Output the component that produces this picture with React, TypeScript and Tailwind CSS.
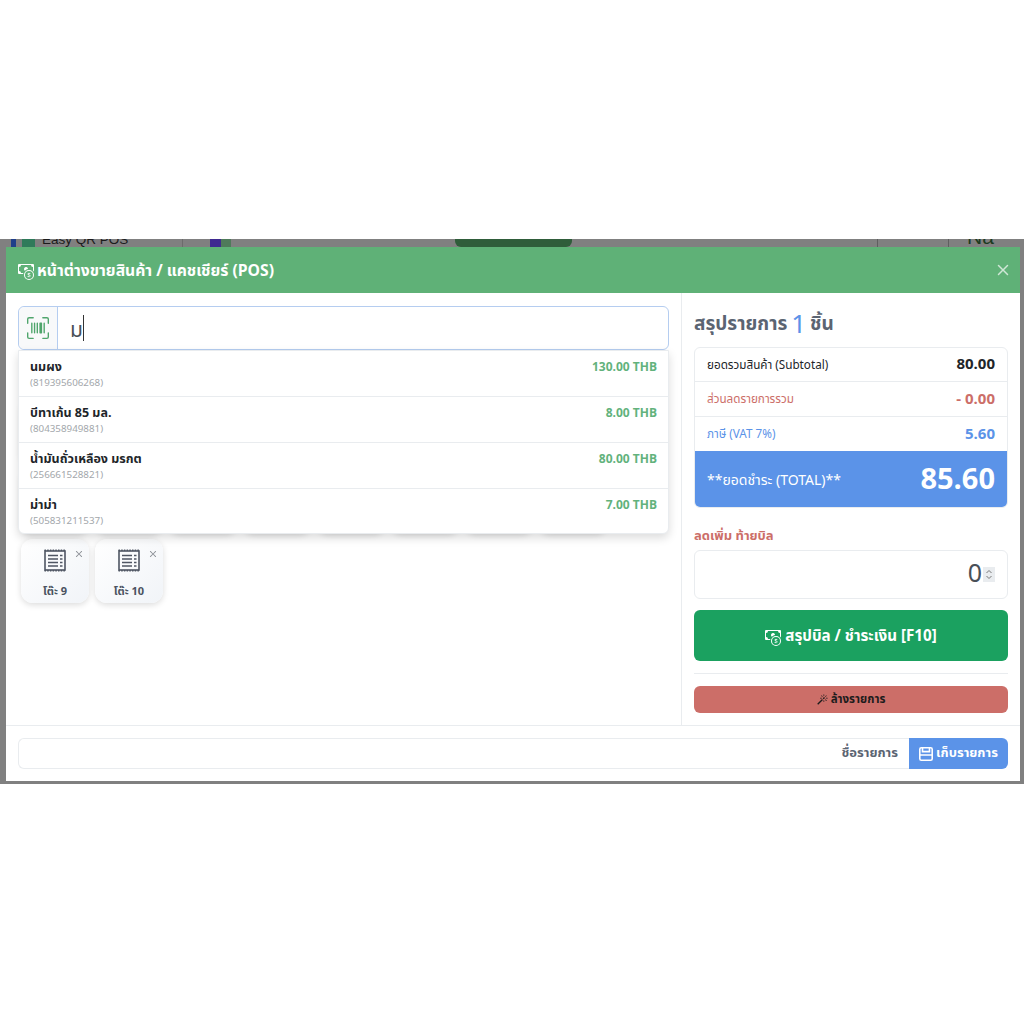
import { BsCashCoin, BsUpcScan, BsMagic, BsX } from "react-icons/bs";

const font = { fontFamily: '"Noto Sans Thai","Noto Sans","Open Sans","DejaVu Sans",sans-serif' };

const items = [
  ["นมผง", "(819395606268)", "130.00 THB"],
  ["บีทาเก้น 85 มล.", "(804358949881)", "8.00 THB"],
  ["น้ำมันถั่วเหลือง มรกต", "(256661528821)", "80.00 THB"],
  ["ม่าม่า", "(505831211537)", "7.00 THB"],
];

function BillIcon() {
  return (
    <svg width="22" height="23" viewBox="0 0 22 23" fill="none" stroke="#4f5663">
      <rect x="1" y="2" width="20" height="19" strokeWidth="1.6" />
      <path d="M0.5 1.2H21.5M0.5 21.8H21.5" strokeWidth="1.6" strokeDasharray="1.5 1.2" />
      <path d="M4 6.5H14M4 10H14M4 13.5H14M4 17H14" strokeWidth="1.5" />
      <path d="M16 6.5H18.5M16 10H18.5M16 13.5H18.5M16 17H18.5" strokeWidth="1.5" />
    </svg>
  );
}

function SaveIcon() {
  return (
    <svg width="14" height="14" viewBox="0 0 14 14" fill="none" stroke="currentColor" strokeWidth="1.6">
      <rect x="0.8" y="0.8" width="12.4" height="12.4" rx="1.5" />
      <path d="M3.5 1V4.6H10.5V1M0.8 8H13.2" />
    </svg>
  );
}

function TableCard({ label }: { label: string }) {
  return (
    <div className="relative flex h-[64px] w-[68px] flex-col items-center rounded-xl bg-gradient-to-br from-white to-[#f1f4f8] pt-[10px] shadow-[0_2px_6px_rgba(0,0,0,0.14)]">
      <BillIcon />
      <BsX className="absolute right-[3px] top-[8px] text-[14px] text-[#8b8f96]" />
      <span className="mt-[13px] text-[11px] font-bold leading-[14px] text-[#4a5260]">{label}</span>
    </div>
  );
}

function SummaryRow({ label, value, color, h, last }: { label: string; value: string; color: string; h: string; last?: boolean }) {
  return (
    <div className={`flex items-center justify-between px-[12px] pt-[2px] ${h} ${last ? "" : "border-b border-[#e9ecef]"} ${color}`}>
      <span className="text-[11.7px]">{label}</span>
      <span className="text-[15px] font-bold">{value}</span>
    </div>
  );
}

export default function App() {
  return (
    <div className="flex min-h-[1024px] flex-col bg-white" style={font}>
      <div className="h-[239px]" />
      <div className="relative bg-[#808080] pb-[3px] pl-[6px] pr-[4px] pt-[8px]">
        <div className="absolute inset-x-0 top-0 h-[8px] overflow-hidden">
          <div className="absolute left-[11px] top-[-8px] h-[16px] w-[5px] bg-[#1f3f8a]" />
          <div className="absolute left-[22px] top-[-8px] h-[16px] w-[13px] bg-[#2f7a5a]" />
          <div className="absolute left-[42px] top-[-9px] text-[13.5px] leading-[20px] text-[#1b1b1b]" style={{ fontFamily: '"Liberation Sans",sans-serif' }}>Easy QR POS</div>
          <div className="absolute left-[182px] top-0 h-[8px] w-px bg-[#6c6c6c]" />
          <div className="absolute left-[210px] top-[-8px] h-[16px] w-[11px] bg-[#3f2a90]" />
          <div className="absolute left-[221px] top-[-8px] h-[16px] w-[10px] bg-[#4f7a5a]" />
          <div className="absolute left-[455px] top-0 h-[8px] w-[117px] rounded-b-md bg-[#2f5d3a]" />
          <div className="absolute left-[877px] top-0 h-[8px] w-px bg-[#5f5f5f]" />
          <div className="absolute left-[948px] top-0 h-[8px] w-px bg-[#5f5f5f]" />
          <div className="absolute left-[967px] top-[-14px] text-[21px] leading-[24px] text-[#1c3a20]" style={{ fontFamily: '"Liberation Sans",sans-serif' }}>Na</div>
        </div>
        <div className="relative flex h-[534px] flex-col bg-white">
          <header className="flex h-[46px] shrink-0 items-center justify-between bg-[#5fb177] pl-[12px] pr-[5px] text-white">
            <div className="flex items-center gap-[3px] pt-[4px]">
              <BsCashCoin className="text-[16px]" />
              <span className="text-[15.7px] font-bold">หน้าต่างขายสินค้า / แคชเชียร์ (POS)</span>
            </div>
            <BsX className="text-[24px] text-[#cfe7d6]" />
          </header>

          <div className="flex min-h-0 flex-1">
            <div className="w-[676px] shrink-0 border-r border-[#e9ecef] pl-[12px] pr-[12px] pt-[13px]">
              <div className="relative">
                <div className="flex h-[44px] rounded-md border border-[#b5cdf0]">
                  <div className="flex w-[39px] items-center justify-center rounded-l-md border-r border-[#b5cdf0] bg-[#f8f9fa]">
                    <BsUpcScan className="text-[22px] text-[#4fa56c]" />
                  </div>
                  <div className="flex items-center pl-[12px] text-[21px] leading-none text-[#495057]">
                    <span className="pt-[5px]">ม</span>
                    <span className="h-[26px] w-px bg-[#333]" />
                  </div>
                </div>
                <div className="absolute inset-x-0 top-[44px] z-10 rounded-b-md border border-[#e9ecef] bg-white shadow-[0_4px_10px_rgba(0,0,0,0.14)]">
                  {items.map(([name, code, price], i) => (
                    <div key={code} className={`flex justify-between px-[11px] pt-[8px] ${i < 3 ? "h-[46px] border-b border-[#e9ecef]" : "h-[44px]"}`}>
                      <div>
                        <div className="text-[12.5px] font-bold leading-[17px] text-[#212529]">{name}</div>
                        <div className="text-[9.8px] leading-[14px] text-[#a3a7ab]">{code}</div>
                      </div>
                      <div className="text-[12px] font-bold leading-[17px] text-[#62b27c]">{price}</div>
                    </div>
                  ))}
                </div>
              </div>
              <div className="mt-[49px] flex flex-wrap gap-x-[6px] gap-y-[6px] pl-[3px]">
                {[1, 2, 3, 4, 5, 6, 7, 8, 1, 2, 3, 4, 5, 6, 7, 8, 9, 10].map((n, i) => (
                  <TableCard key={i} label={`โต๊ะ ${n}`} />
                ))}
              </div>
            </div>

            <aside className="flex flex-1 flex-col pl-[12px] pr-[12px] pt-[15px]">
              <h2 className="flex h-[32px] items-center gap-[4px] pt-[2px] text-[19px] font-bold text-[#5b6472]">
                สรุปรายการ <span className="text-[26px] font-normal leading-none text-[#5b93e8]">1</span> ชิ้น
              </h2>
              <div className="mt-[7px] overflow-hidden rounded-md border border-[#e9ecef]">
                <SummaryRow h="h-[34px]" label="ยอดรวมสินค้า (Subtotal)" value="80.00" color="text-[#212529]" />
                <SummaryRow h="h-[35px]" label="ส่วนลดรายการรวม" value="- 0.00" color="text-[#cc6e68]" />
                <SummaryRow h="h-[34px]" last label="ภาษี (VAT 7%)" value="5.60" color="text-[#5b93e8]" />
                <div className="flex h-[56px] items-center justify-between bg-[#5b93e8] px-[12px] pt-[3px] text-white">
                  <span className="text-[14px]">**ยอดชำระ (TOTAL)**</span>
                  <span className="text-[29px] font-bold">85.60</span>
                </div>
              </div>
              <div className="mt-[19px] text-[13px] font-bold leading-[18px] text-[#cc6e68]">ลดเพิ่ม ท้ายบิล</div>
              <div className="mt-[5px] flex h-[49px] items-center justify-end rounded-md border border-[#e9ecef] px-[12px] text-[25px] text-[#495057]">
                0
                <span className="ml-[1px] flex h-[15px] w-[12px] items-center justify-center bg-[#e9ecef]">
                  <svg width="8" height="11" viewBox="0 0 8 11" fill="none" stroke="#777" strokeWidth="1">
                    <path d="M1.5 4 4 1.5 6.5 4M1.5 7 4 9.5 6.5 7" />
                  </svg>
                </span>
              </div>
              <button className="mt-[11px] flex h-[51px] items-center justify-center gap-[4px] rounded-md bg-[#1ba160] pt-[4px] text-[15.2px] font-bold text-white">
                <BsCashCoin className="text-[16px]" /> สรุปบิล / ชำระเงิน [F10]
              </button>
              <div className="mt-[12px] border-t border-[#e9ecef]" />
              <button className="mt-[12px] flex h-[27px] items-center justify-center gap-[3px] rounded-md bg-[#cc6e68] text-[11.5px] font-bold text-[#1c1c1c]">
                <BsMagic className="text-[11px]" /> ล้างรายการ
              </button>
            </aside>
          </div>

          <footer className="flex h-[56px] shrink-0 items-center border-t border-[#e9ecef] px-[12px]">
            <div className="flex h-[31px] flex-1 items-center justify-end rounded-l-md border border-r-0 border-[#e9ecef] pr-[11px] text-[13px] font-bold text-[#5b6472]">
              ชื่อรายการ
            </div>
            <button className="flex h-[31px] w-[99px] items-center justify-center gap-[3px] rounded-r-md bg-[#5b93e8] text-[13px] font-bold text-white">
              <SaveIcon /> เก็บรายการ
            </button>
          </footer>
        </div>
      </div>
    </div>
  );
}
